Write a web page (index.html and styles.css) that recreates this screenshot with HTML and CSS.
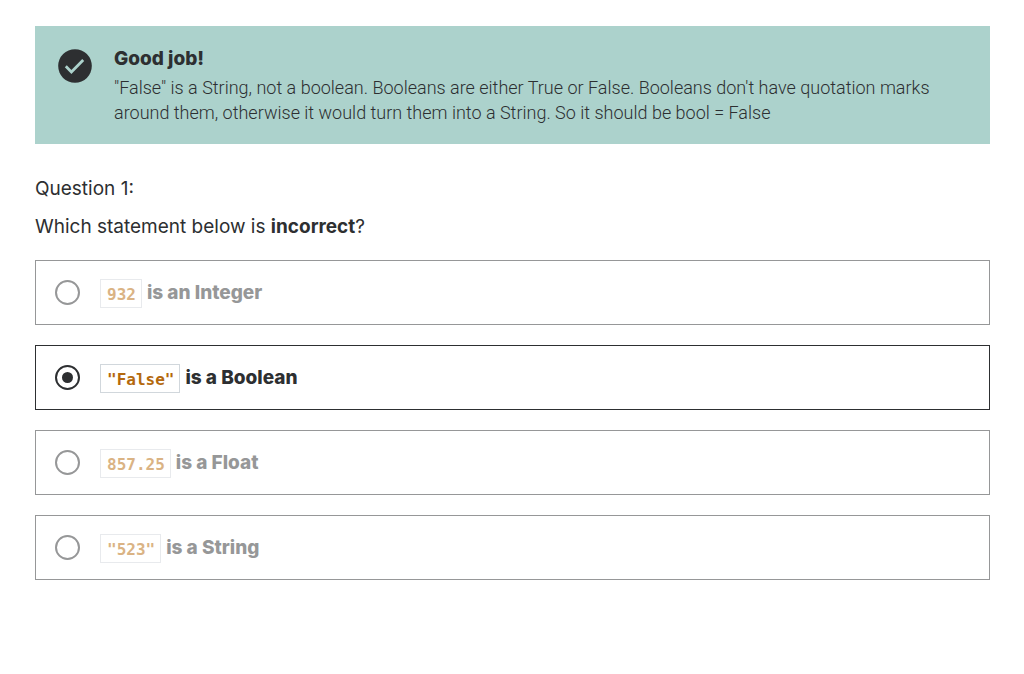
FILE: index.html
```html
<!DOCTYPE html>
<html lang="en">
<head>
<meta charset="utf-8">
<meta name="viewport" content="width=device-width, initial-scale=1">
<title>Quiz: Question 1</title>
<link rel="stylesheet" href="styles.css">
</head>
<body>
<main class="quiz">
  <section class="feedback" role="status">
    <svg class="feedback-icon" viewBox="0 0 34 34" aria-hidden="true">
      <circle cx="17" cy="17" r="16.8" fill="#2d2f31"/>
      <path d="M7.8 17.3 L13.4 22.9 L25.2 11.1" fill="none" stroke="#acd2cc" stroke-width="2.8"/>
    </svg>
    <div class="feedback-body">
      <h2 class="feedback-title">Good job!</h2>
      <p class="feedback-text">"False" is a String, not a boolean. Booleans are either True or False. Booleans don't have quotation marks around them, otherwise it would turn them into a String. So it should be bool = False</p>
    </div>
  </section>
  <form class="question">
    <p class="question-number">Question 1:</p>
    <p class="question-prompt" id="prompt">Which statement below is <strong>incorrect</strong>?</p>
    <div class="answers" role="radiogroup" aria-labelledby="prompt">
      <label class="answer"><input class="answer-radio" type="radio" name="answer"><span class="answer-text"><code class="answer-code">932</code> is an Integer</span></label>
      <label class="answer answer-selected"><input class="answer-radio" type="radio" name="answer" checked><span class="answer-text"><code class="answer-code">"False"</code> is a Boolean</span></label>
      <label class="answer"><input class="answer-radio" type="radio" name="answer"><span class="answer-text"><code class="answer-code">857.25</code> is a Float</span></label>
      <label class="answer"><input class="answer-radio" type="radio" name="answer"><span class="answer-text"><code class="answer-code">"523"</code> is a String</span></label>
    </div>
  </form>
</main>
</body>
</html>
```
FILE: styles.css
```css
* {
  box-sizing: border-box;
}

body {
  margin: 0;
  background: #fff;
  color: #2d2f31;
  font-family: Inter, "Liberation Sans", sans-serif;
}

.quiz {
  padding: 26px 34px 26px 35px;
}

.feedback {
  display: flex;
  gap: 22px;
  padding: 20px 48px 19px 23px;
  background: #acd2cc;
}

.feedback-icon {
  flex: none;
  width: 34px;
  height: 34px;
  margin-top: 3px;
}

.feedback-title {
  margin: 0;
  font-size: 19px;
  font-weight: 800;
  line-height: 25px;
}

.feedback-text {
  margin: 4px 0 0;
  font-family: Roboto, "Liberation Sans", sans-serif;
  font-size: 18px;
  font-weight: 300;
  line-height: 25px;
}

.question {
  margin-top: 31px;
}

.question-number,
.question-prompt {
  margin: 0 0 10px;
  font-size: 19px;
  line-height: 28px;
}

.answers {
  display: grid;
  gap: 20px;
  margin-top: 19px;
}

.answer {
  display: flex;
  align-items: center;
  gap: 20px;
  min-height: 65px;
  padding: 0 19px;
  border: 1px solid #969798;
  color: #969798;
}

.answer-radio {
  appearance: none;
  display: grid;
  place-items: center;
  flex: none;
  width: 25px;
  height: 25px;
  margin: 0;
  border: 2px solid currentColor;
  border-radius: 50%;
  color: inherit;
}

.answer-radio:checked::before {
  content: "";
  width: 11px;
  height: 11px;
  border-radius: 50%;
  background: currentColor;
}

.answer-text {
  display: flex;
  align-items: center;
  gap: 5px;
  font-size: 19px;
  font-weight: 800;
  line-height: 28px;
}

.answer-code {
  margin-top: 1px;
  padding: 5px 5px 3px 6px;
  border: 1px solid #e8eaed;
  color: #dab384;
  font-family: "DejaVu Sans Mono", monospace;
  font-size: 16px;
  font-weight: 700;
  line-height: 19px;
}

.answer-selected {
  border-color: #2d2f31;
  color: #2d2f31;
}

.answer-selected .answer-code {
  border-color: #d1d7dc;
  color: #b4690e;
}
```
